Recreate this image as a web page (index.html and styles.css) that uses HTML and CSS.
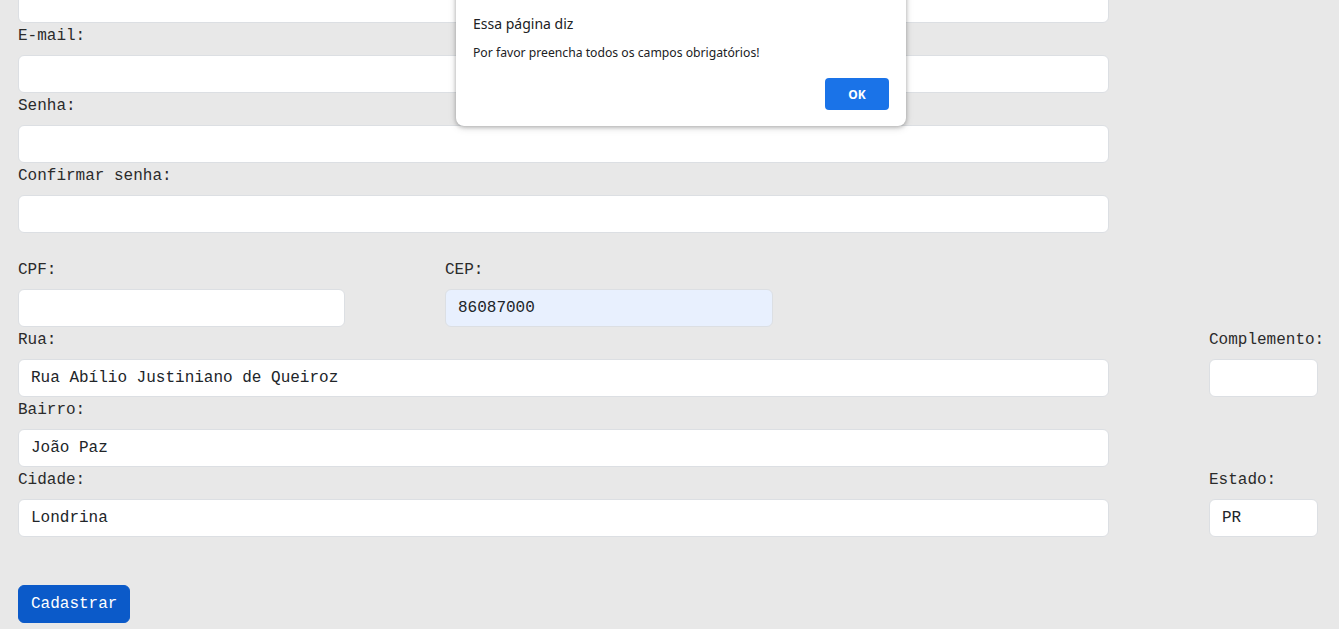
FILE: index.html
```html
<!DOCTYPE html>
<html lang="pt-BR">
<head>
<meta charset="utf-8">
<title>Cadastro</title>
<link rel="stylesheet" href="styles.css">
</head>
<body>
<form class="form">
  <div class="field field-cut">
    <input class="input" type="text">
  </div>
  <div class="field">
    <label class="label">E-mail:</label>
    <input class="input" type="email">
  </div>
  <div class="field">
    <label class="label">Senha:</label>
    <input class="input" type="password">
  </div>
  <div class="field">
    <label class="label">Confirmar senha:</label>
    <input class="input" type="password">
  </div>

  <div class="row row-docs">
    <div class="field col-small">
      <label class="label">CPF:</label>
      <input class="input" type="text">
    </div>
    <div class="field col-small">
      <label class="label">CEP:</label>
      <input class="input input-autofill" type="text" value="86087000">
    </div>
  </div>

  <div class="row">
    <div class="field col-main">
      <label class="label">Rua:</label>
      <input class="input" type="text" value="Rua Abílio Justiniano de Queiroz">
    </div>
    <div class="field col-side">
      <label class="label">Complemento:</label>
      <input class="input" type="text">
    </div>
  </div>

  <div class="row">
    <div class="field col-main">
      <label class="label">Bairro:</label>
      <input class="input" type="text" value="João Paz">
    </div>
  </div>

  <div class="row">
    <div class="field col-main">
      <label class="label">Cidade:</label>
      <input class="input" type="text" value="Londrina">
    </div>
    <div class="field col-side">
      <label class="label">Estado:</label>
      <input class="input" type="text" value="PR">
    </div>
  </div>

  <div class="actions">
    <button class="btn" type="button">Cadastrar</button>
  </div>
</form>

<div class="dialog">
  <div class="dialog-title">Essa página diz</div>
  <div class="dialog-msg">Por favor preencha todos os campos obrigatórios!</div>
  <div class="dialog-actions">
    <button class="dialog-ok" type="button">OK</button>
  </div>
</div>
</body>
</html>
```

FILE: styles.css
```css
html, body {
  margin: 0;
  padding: 0;
  background: #e8e8e8;
  overflow: hidden;
}

body {
  font-family: "Liberation Mono", "Courier New", monospace;
  color: #2b2b2b;
  height: 629px;
  position: relative;
}

.form {
  margin-top: -15px;
  padding-left: 18px;
  width: 1300px;
  display: flex;
  flex-direction: column;
}

.field {
  display: flex;
  flex-direction: column;
  width: 1091px;
}

.label {
  display: block;
  font-size: 16px;
  line-height: 18px;
  padding-top: 4px;
  margin-bottom: 10px;
  color: #2b2b2b;
}

.input {
  box-sizing: border-box;
  height: 38px;
  width: 100%;
  margin: 0;
  padding: 0 12px;
  border: 1px solid #dcdfe3;
  border-radius: 6px;
  background: #ffffff;
  font-family: "Liberation Mono", "Courier New", monospace;
  font-size: 16px;
  color: #212529;
  outline: none;
}

.input-autofill {
  background: #e8f0fe;
}

.row {
  display: flex;
}

.row-docs {
  margin-top: 24px;
  gap: 100px;
}

.col-small {
  width: 327px;
}

.row-docs .col-small + .col-small {
  width: 328px;
}

.col-main {
  width: 1091px;
}

.col-side {
  width: 109px;
  margin-left: 100px;
}

.actions {
  margin-top: 48px;
}

.btn {
  height: 38px;
  padding: 0 12px;
  border: 1px solid #0b5ac9;
  border-radius: 6px;
  background: #0b5ac9;
  color: #ffffff;
  font-family: "Liberation Mono", "Courier New", monospace;
  font-size: 16px;
  line-height: 18px;
}

.dialog {
  position: absolute;
  left: 456px;
  top: -20px;
  width: 450px;
  height: 146px;
  box-sizing: border-box;
  background: #ffffff;
  border-radius: 8px;
  box-shadow: 0 1px 4px rgba(0, 0, 0, 0.28), 0 2px 8px rgba(0, 0, 0, 0.12);
  padding: 34px 17px 0 17px;
  font-family: "Noto Sans", "Open Sans", sans-serif;
}

.dialog-title {
  font-size: 14px;
  line-height: 20px;
  color: #202124;
}

.dialog-msg {
  font-size: 12.2px;
  line-height: 16px;
  margin-top: 11px;
  color: #202124;
}

.dialog-actions {
  display: flex;
  justify-content: flex-end;
  margin-top: 17px;
}

.dialog-ok {
  width: 64px;
  height: 32px;
  border: none;
  border-radius: 4px;
  background: #1a73e8;
  color: #ffffff;
  font-family: "Noto Sans", "Open Sans", sans-serif;
  font-weight: 700;
  font-size: 12px;
}
```
